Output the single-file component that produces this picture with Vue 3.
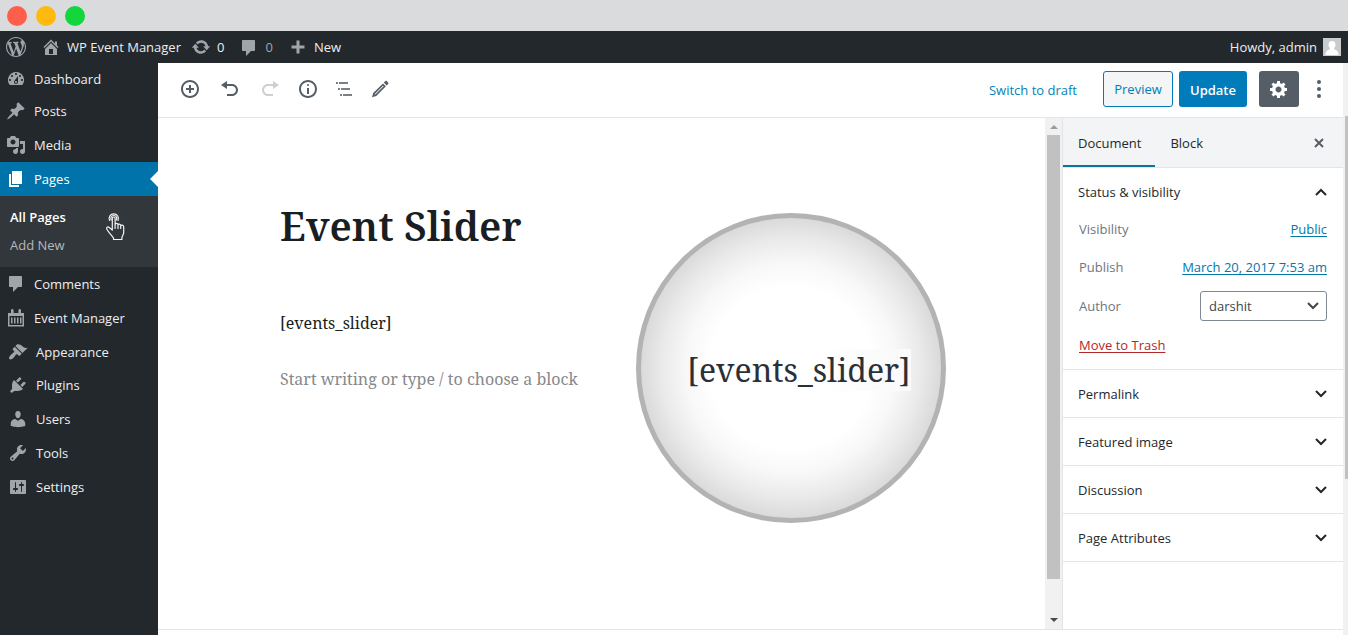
<script setup>
import { ref } from 'vue'

const icons = {
  wordpress: 'M20 10c0-5.51-4.49-10-10-10C4.48 0 0 4.49 0 10c0 5.52 4.48 10 10 10 5.51 0 10-4.48 10-10zM7.78 15.37L4.37 6.22c.55-.02 1.17-.08 1.17-.08.5-.06.44-1.13-.06-1.11 0 0-1.45.11-2.37.11-.18 0-.37 0-.58-.01C4.12 2.69 6.87 1.11 10 1.11c2.33 0 4.45.87 6.05 2.34-.68-.11-1.65.39-1.65 1.58 0 .74.45 1.36.9 2.1.35.61.55 1.36.55 2.46 0 1.49-1.4 5-1.4 5l-3.03-8.37c.54-.02.82-.17.82-.17.5-.05.44-1.25-.06-1.22 0 0-1.44.12-2.38.12-.87 0-2.33-.12-2.33-.12-.5-.03-.56 1.2-.06 1.22l.92.08 1.26 3.41zM17.41 10c.24-.64.74-1.87.43-4.25.7 1.29 1.05 2.71 1.05 4.25 0 3.29-1.73 6.24-4.4 7.78.97-2.59 1.94-5.2 2.92-7.78zM6.1 18.09C3.12 16.65 1.11 13.53 1.11 10c0-1.3.23-2.48.72-3.59C3.25 10.3 4.67 14.2 6.1 18.09zm4.03-6.63l2.58 6.98c-.86.29-1.76.45-2.71.45-.79 0-1.57-.11-2.29-.33.81-2.38 1.62-4.74 2.42-7.1z',
  home: 'M16 8.5l1.53 1.53-1.06 1.06L10 4.6l-6.47 6.49-1.06-1.06L10 2.5l4 4v-2h2v4zm-6-2.46l6 5.99V18H4v-5.97zM12 17v-5H8v5h4z',
  update: 'M10.2 3.28c3.53 0 6.43 2.61 6.92 6h2.08l-3.5 4-3.5-4h2.32c-.45-1.97-2.21-3.45-4.32-3.45-1.45 0-2.73.71-3.54 1.78L4.95 5.66C6.23 4.2 8.11 3.28 10.2 3.28zm-.4 13.44c-3.52 0-6.43-2.61-6.92-6H.8l3.5-4c1.17 1.33 2.33 2.67 3.5 4H5.48c.45 1.97 2.21 3.45 4.32 3.45 1.45 0 2.73-.71 3.54-1.78l1.71 1.95c-1.28 1.46-3.15 2.38-5.25 2.38z',
  comment: 'M4 2h11c.6 0 1 .4 1 1v9c0 .6-.4 1-1 1h-3l-5 5v-5H4c-.6 0-1-.4-1-1V3c0-.6.4-1 1-1z',
  plus: 'M8.5 3.5h3v5h5v3h-5v5h-3v-5h-5v-3h5z',
  dashboard: 'M3.76 16h12.48A7.998 7.998 0 0 0 10 3a7.998 7.998 0 0 0-6.24 13zM10 4c.55 0 1 .45 1 1s-.45 1-1 1-1-.45-1-1 .45-1 1-1zM6 6c.55 0 1 .45 1 1s-.45 1-1 1-1-.45-1-1 .45-1 1-1zm8 0c.55 0 1 .45 1 1s-.45 1-1 1-1-.45-1-1 .45-1 1-1zm-5.37 5.55L12 7v6c0 1.1-.9 2-2 2s-2-.9-2-2c0-.57.24-1.08.63-1.45zM4 10c.55 0 1 .45 1 1s-.45 1-1 1-1-.45-1-1 .45-1 1-1zm12 0c.55 0 1 .45 1 1s-.45 1-1 1-1-.45-1-1 .45-1 1-1zm-5 3c0-.55-.45-1-1-1s-1 .45-1 1 .45 1 1 1 1-.45 1-1z',
  post: 'M10.44 3.02l1.82-1.82 6.36 6.35-1.83 1.82c-1.05-.68-2.48-.57-3.41.36l-.75.75c-.92.93-1.04 2.35-.35 3.41l-1.83 1.82-2.41-2.41-2.8 2.79c-.42.42-3.38 2.71-3.8 2.29s1.86-3.39 2.28-3.81l2.79-2.79L4.1 9.36l1.83-1.82c1.05.69 2.48.57 3.4-.36l.75-.75c.93-.92 1.05-2.35.36-3.41z',
  media: 'M13 11V4c0-.55-.45-1-1-1h-1.67L9 1H5L3.67 3H2c-.55 0-1 .45-1 1v7c0 .55.45 1 1 1h10c.55 0 1-.45 1-1zM7 4.5c1.38 0 2.5 1.12 2.5 2.5S8.38 9.5 7 9.5 4.5 8.38 4.5 7 5.62 4.5 7 4.5zM14 6h5v10.5c0 1.38-1.12 2.5-2.5 2.5S14 17.88 14 16.5s1.12-2.5 2.5-2.5c.17 0 .34.02.5.05V9h-3V6zm-4 8.05V13h2v3.5c0 1.38-1.12 2.5-2.5 2.5S7 17.88 7 16.5 8.12 14 9.5 14c.17 0 .34.02.5.05z',
  page: 'M6 15V2h10v13H6zm-1 1h8v2H3V5h2v11z',
  calendar: 'M2 5h3V2.5C5 1.7 5.5 1 6.3 1s1.300.7 1.300 1.500V5h4.800V2.500c0-.8.5-1.500 1.300-1.500s1.300.7 1.300 1.500V5h3v13.500H2zM3.500 8v9h13V8zM5 9.500h1.500v6H5zm3 0h1.500v6H8zm3 0h1.500v6H11zm3 0h1.500v6H14z',
  appearance: 'M14.48 11.06L7.41 3.99l1.5-1.5c.5-.56 2.3-.47 3.51.32 1.21.8 1.43 1.28 2.91 2.1 1.18.64 2.45 1.26 4.45.85zm-.71.71L6.7 4.7 4.93 6.47c-.39.39-.39 1.02 0 1.41l1.06 1.06c.39.39.39 1.03 0 1.42-.6.6-1.43 1.11-2.21 1.69-.35.26-.7.53-1.01.84C1.43 14.23.4 16.08 1.4 17.07c.99 1 2.84-.03 4.18-1.36.31-.31.58-.66.85-1.02.57-.78 1.08-1.61 1.69-2.21.39-.39 1.02-.39 1.41 0l1.06 1.06c.39.39 1.02.39 1.41 0z',
  plugins: 'M13.11 4.36L9.87 7.6 8 5.73l3.24-3.24c.35-.34 1.05-.2 1.56.32.52.51.66 1.21.31 1.55zm-8 1.77l.91-1.12 9.01 9.01-1.19.84c-.71.71-2.63 1.16-3.82 1.16H6.14L4.9 17.26c-.59.59-1.54.59-2.12 0-.59-.58-.59-1.53 0-2.12l1.24-1.24v-3.88c0-1.13.4-3.19 1.09-3.89zm7.26 3.97l3.24-3.24c.34-.35 1.04-.21 1.55.31.52.51.66 1.21.31 1.55l-3.24 3.25z',
  users: 'M10 9.25c-2.27 0-2.73-3.44-2.73-3.44C7 4.02 7.82 2 9.97 2c2.16 0 2.98 2.02 2.71 3.81 0 0-.41 3.44-2.68 3.44zm0 2.57L12.72 10c2.39 0 4.52 2.33 4.52 4.53v2.49s-3.65 1.13-7.24 1.13c-3.65 0-7.24-1.13-7.24-1.13v-2.49c0-2.25 1.94-4.48 4.47-4.48z',
  tools: 'M16.68 9.77c-1.34 1.34-3.3 1.67-4.95.99l-5.41 6.52c-.99.99-2.59.99-3.58 0s-.99-2.59 0-3.57l6.52-5.42c-.68-1.65-.35-3.61.99-4.95 1.28-1.28 3.12-1.62 4.72-1.06l-2.89 2.89 2.82 2.82 2.86-2.87c.53 1.58.18 3.39-1.08 4.65zM3.81 16.21c.4.39 1.04.39 1.43 0 .4-.4.4-1.04 0-1.43-.39-.4-1.03-.4-1.43 0-.39.39-.39 1.03 0 1.43z',
  settings: 'M18 16V4c0-.55-.45-1-1-1H3c-.55 0-1 .45-1 1v12c0 .55.45 1 1 1h14c.55 0 1-.45 1-1zM8 11h1c.55 0 1 .45 1 1s-.45 1-1 1H8v1.5c0 .28-.22.5-.5.5s-.5-.22-.5-.5V13H6c-.55 0-1-.45-1-1s.45-1 1-1h1V5.5c0-.28.22-.5.5-.5s.5.22.5.5V11zm5-2h-1c-.55 0-1-.45-1-1s.45-1 1-1h1V5.5c0-.28.22-.5.5-.5s.5.22.5.5V7h1c.55 0 1 .45 1 1s-.45 1-1 1h-1v5.5c0 .28-.22.5-.5.5s-.5-.22-.5-.5V9z',
  gear: 'M18 12h-2.18c-.17.7-.44 1.35-.81 1.93l1.54 1.54-2.1 2.1-1.54-1.54c-.58.36-1.23.63-1.91.79V19H8v-2.18c-.68-.16-1.33-.43-1.91-.79l-1.54 1.54-2.12-2.12 1.54-1.54c-.36-.58-.63-1.23-.79-1.91H1V9.030h2.170c.16-.7.44-1.350.8-1.940L2.430 5.550l2.100-2.100 1.540 1.540c.58-.37 1.240-.64 1.930-.81V2h3v2.180c.68.16 1.330.43 1.910.79l1.540-1.540 2.120 2.120-1.540 1.540c.36.59.64 1.240.8 1.940H18V12zm-8.500 1.500c1.660 0 3-1.340 3-3s-1.340-3-3-3-3 1.340-3 3 1.340 3 3 3z',
  insert: 'M10 1c-5 0-9 4-9 9s4 9 9 9 9-4 9-9-4-9-9-9zm0 16c-3.900 0-7-3.100-7-7s3.100-7 7-7 7 3.100 7 7-3.100 7-7 7zm1-11H9v3H6v2h3v3h2v-3h3V9h-3V6z',
  undo: 'M12 5H7V2L1 6l6 4V7h5c2.200 0 4 1.800 4 4s-1.800 4-4 4H7v2h5c3.300 0 6-2.700 6-6s-2.700-6-6-6z',
  redo: 'M8 5h5V2l6 4-6 4V7H8c-2.200 0-4 1.800-4 4s1.800 4 4 4h5v2H8c-3.300 0-6-2.700-6-6s2.700-6 6-6z',
  info: 'M9 15h2V9H9v6zm1-10c-.5 0-1 .5-1 1s.5 1 1 1 1-.5 1-1-.5-1-1-1zm0-4c-5 0-9 4-9 9s4 9 9 9 9-4 9-9-4-9-9-9zm0 16c-3.900 0-7-3.100-7-7s3.100-7 7-7 7 3.100 7 7-3.100 7-7 7z',
  outline: 'M2 3h2v2H2zm3 0h9v2H5zM4 9h2v2H4zm3 0h9v2H7zM6 15h2v2H6zm3 0h9v2H9z',
  pencil: 'M15.200 2.200c.5-.5 1.200-.5 1.700 0l1.200 1.200c.5.5.5 1.200 0 1.700l-1.400 1.400-2.900-2.900zM13 4.400l2.900 2.900L6.300 17 2 18.200l1.200-4.300zm0 2.300l-8 8-.4 1 1-.4L13.600 7.300z',
}

const mainMenu = [
  { label: 'Dashboard', icon: 'dashboard' },
  { label: 'Posts', icon: 'post' },
  { label: 'Media', icon: 'media' },
  { label: 'Pages', icon: 'page', current: true },
]
const contentMenu = [
  { label: 'Comments', icon: 'comment' },
  { label: 'Event Manager', icon: 'calendar' },
]
const adminMenu = [
  { label: 'Appearance', icon: 'appearance' },
  { label: 'Plugins', icon: 'plugins' },
  { label: 'Users', icon: 'users' },
  { label: 'Tools', icon: 'tools' },
  { label: 'Settings', icon: 'settings' },
]
const historyTools = [
  { label: 'Add block', icon: 'insert' },
  { label: 'Undo', icon: 'undo' },
  { label: 'Redo', icon: 'redo', disabled: true },
]
const documentTools = [
  { label: 'Content structure', icon: 'info' },
  { label: 'Block navigation', icon: 'outline' },
  { label: 'Edit', icon: 'pencil' },
]
const closedPanels = ['Permalink', 'Featured image', 'Discussion', 'Page Attributes']
const author = ref('darshit')
</script>

<template>
  <div class="window">
    <div class="titlebar">
      <span class="dot red"></span><span class="dot amber"></span><span class="dot green"></span>
    </div>

    <header class="adminbar">
      <a href="#" class="bar-item logo" aria-label="About WordPress"><svg viewBox="0 0 20 20"><path :d="icons.wordpress" /></svg></a>
      <a href="#" class="bar-item site"><svg viewBox="0 0 20 20"><path :d="icons.home" /></svg>WP Event Manager</a>
      <a href="#" class="bar-item updates"><svg viewBox="0 0 20 20"><path :d="icons.update" /></svg>0</a>
      <a href="#" class="bar-item muted"><svg viewBox="0 -1 20 20"><path :d="icons.comment" /></svg>0</a>
      <a href="#" class="bar-item new"><svg viewBox="0 0 20 20"><path :d="icons.plus" /></svg>New</a>
      <a href="#" class="bar-item account">Howdy, admin
        <svg class="avatar" viewBox="0 0 18 18"><path fill="#c9cbcd" d="M0 0h18v18H0z" /><path fill="#fff" d="M9 3c2.300 0 3.500 1.600 3.500 3.600 0 1.500-.6 2.900-1.500 3.700v1c2.500.7 4.500 1.900 4.500 5.700h-13c0-3.800 2-5 4.500-5.700v-1c-.9-.8-1.500-2.200-1.500-3.700C5.500 4.600 6.700 3 9 3z" /></svg>
      </a>
    </header>

    <div class="shell">
      <nav class="menu" aria-label="Main menu">
        <div class="main-group">
          <a v-for="item in mainMenu" :key="item.label" href="#" :class="['menu-item', { current: item.current }]">
            <svg viewBox="0 0 20 20"><path :d="icons[item.icon]" /></svg>{{ item.label }}
          </a>
        </div>
        <div class="submenu">
          <a href="#" class="active">All Pages</a>
          <a href="#">Add New</a>
          <svg class="hand" viewBox="0 0 22 28">
            <g fill="none" stroke="#f4f4f4" stroke-width="1.200" stroke-linejoin="round" stroke-linecap="round">
              <path d="M5.500 7.500a4.700 4.700 0 1 1 8.500 0M7.200 7a3 3 0 1 1 5.200 0" />
              <path d="M8.300 17V5.500c0-2 2.800-2 2.800 0v6c.3-1.600 2.800-1.500 2.900.3.500-1.200 2.600-.9 2.700.8.700-1 3-.6 3 1.400v5.500c0 2.500-1.800 3.500-1.800 5.500v1.500H9.500V25c-1.500-2.500-4.500-5-6.500-8.500-1.200-2 .8-3.300 2.200-2zM11.100 11.500v4M14 12v3.500M16.700 13v2.500" />
            </g>
          </svg>
        </div>
        <a v-for="item in contentMenu" :key="item.label" href="#" class="menu-item">
          <svg viewBox="0 0 20 20"><path fill-rule="evenodd" :d="icons[item.icon]" /></svg>{{ item.label }}
        </a>
        <div class="admin-group">
          <a v-for="item in adminMenu" :key="item.label" href="#" class="menu-item">
            <svg viewBox="0 0 20 20"><path :d="icons[item.icon]" /></svg>{{ item.label }}
          </a>
        </div>
      </nav>

      <main class="editor">
        <div class="toolbar">
          <div class="tools history">
            <button v-for="t in historyTools" :key="t.label" type="button" :aria-label="t.label" :disabled="t.disabled">
              <svg viewBox="0 0 20 20"><path :d="icons[t.icon]" /></svg>
            </button>
          </div>
          <div class="tools">
            <button v-for="t in documentTools" :key="t.label" type="button" :aria-label="t.label" :class="t.icon">
              <svg viewBox="0 0 20 20"><path fill-rule="evenodd" :d="icons[t.icon]" /></svg>
            </button>
          </div>
          <div class="actions">
            <button type="button" class="draft">Switch to draft</button>
            <button type="button" class="preview">Preview</button>
            <button type="button" class="update">Update</button>
            <button type="button" class="gear" aria-label="Settings"><svg viewBox="0 0 20 20"><path :d="icons.gear" /></svg></button>
            <button type="button" class="more" aria-label="More options">
              <svg viewBox="0 0 8 20"><circle cx="4" cy="3" r="2" /><circle cx="4" cy="10" r="2" /><circle cx="4" cy="17" r="2" /></svg>
            </button>
          </div>
        </div>

        <div class="workspace">
          <section class="canvas">
            <article class="post">
              <h1>Event Slider</h1>
              <p>[events_slider]</p>
              <p class="prompt">Start writing or type / to choose a block</p>
            </article>
            <div class="lens"><span>[events_slider]</span></div>
          </section>

          <div class="scrollbar" aria-hidden="true">
            <svg viewBox="0 0 10 6"><path fill="#9b9b9b" d="M1 5l4-4 4 4z" /></svg>
            <div class="track"><div class="thumb"></div></div>
            <svg viewBox="0 0 10 6"><path fill="#4a4a4a" d="M1 1l4 4 4-4z" /></svg>
          </div>

          <aside class="sidebar">
            <div class="tabs">
              <button type="button" class="tab selected">Document</button>
              <button type="button" class="tab">Block</button>
              <button type="button" class="close" aria-label="Close settings">
                <svg viewBox="0 0 12 12"><path d="M2 2l8 8M10 2l-8 8" /></svg>
              </button>
            </div>
            <section class="panel">
              <button type="button" class="panel-title">Status &amp; visibility
                <svg viewBox="0 0 14 10"><path d="M2 8l5-5 5 5" /></svg>
              </button>
              <div class="rows">
                <div class="row"><span>Visibility</span><a href="#">Public</a></div>
                <div class="row"><span>Publish</span><a href="#">March 20, 2017 7:53 am</a></div>
                <div class="row">
                  <label for="author">Author</label>
                  <div class="select">
                    <select id="author" v-model="author"><option>darshit</option></select>
                    <svg viewBox="0 0 14 10"><path d="M2 2l5 5 5-5" /></svg>
                  </div>
                </div>
                <div class="row"><a href="#" class="trash">Move to Trash</a></div>
              </div>
            </section>
            <section v-for="name in closedPanels" :key="name" class="panel">
              <button type="button" class="panel-title">{{ name }}
                <svg viewBox="0 0 14 10"><path d="M2 2l5 5 5-5" /></svg>
              </button>
            </section>
          </aside>
        </div>
      </main>

      <div class="page-scroll" aria-hidden="true"><div class="page-thumb"></div></div>
    </div>
  </div>
</template>

<style>
body { margin: 0; }
</style>

<style scoped>
* { box-sizing: border-box; }
.window {
  display: flex;
  flex-direction: column;
  height: 100vh;
  overflow: hidden;
  background: #fff;
  color: #191e23;
  font: 13px/20px "Open Sans", "Noto Sans", sans-serif;
}
a { color: inherit; text-decoration: none; }
button { margin: 0; padding: 0; border: 0; background: none; font: inherit; color: inherit; white-space: nowrap; }
svg { display: block; flex: none; fill: currentColor; }

.titlebar { display: flex; align-items: center; gap: 9px; flex: none; height: 31px; padding-left: 7px; background: #dadbdd; }
.dot { width: 20px; height: 20px; border-radius: 50%; }
.red { background: #ff5f4a; }
.amber { background: #ffb90f; }
.green { background: #12d63c; }

.adminbar { display: flex; align-items: center; flex: none; height: 32px; padding: 0 7px 0 6px; background: #23282d; color: #eee; }
.bar-item { display: flex; align-items: center; gap: 6px; white-space: nowrap; }
.bar-item svg { width: 20px; height: 20px; color: #a0a5aa; }
.site { margin-left: 15px; }
.updates { margin-left: 10px; }
.muted { margin-left: 15px; color: #a0a5aa; }
.new { margin-left: 15px; }
.account { margin-left: auto; }
.bar-item .avatar { width: 18px; height: 18px; }

.shell { display: flex; flex: 1; min-height: 0; }
.menu { flex: none; width: 158px; background: #23282d; color: #eee; }
.menu-item { display: flex; align-items: center; gap: 8px; height: 34px; padding-left: 6px; }
.main-group .menu-item:first-child { height: 31px; }
.menu-item svg { width: 20px; height: 20px; color: #a0a5aa; }
.current { position: relative; background: #0073aa; color: #fff; }
.menu-item.current svg { color: #fff; }
.current::after { content: ""; position: absolute; right: 0; top: 9px; border: 8px solid transparent; border-left-width: 0; border-right-color: #fff; }
.submenu { position: relative; display: flex; flex-direction: column; gap: 8px; height: 71px; padding: 11px 10px; background: #32373c; color: #b4b9be; }
.active { color: #fff; font-weight: 600; }
.hand { position: absolute; left: 104px; top: 17px; width: 22px; height: 28px; }
.admin-group { padding-left: 2px; }
.admin-group .menu-item:first-child { height: 33px; }

.editor { display: flex; flex-direction: column; flex: 1; min-width: 0; padding-bottom: 5px; }
.toolbar { display: flex; align-items: center; gap: 2px; flex: none; height: 55px; padding: 0 14px 2px; border-bottom: 1px solid #e2e4e7; color: #555d66; }
.tools { display: flex; }
.history { gap: 4px; }
.tools button { display: grid; place-items: center; width: 36px; height: 36px; }
.tools svg { width: 20px; height: 20px; }
.tools .outline { color: #7a8087; }
.tools button:disabled { color: #cdcfd2; }
.actions { display: flex; align-items: center; margin-left: auto; }
.draft { margin-right: 26px; padding-top: 2px; color: #0085ba; }
.preview { width: 70px; height: 36px; margin-right: 6px; border: 1px solid #007cba; border-radius: 3px; background: #f3f5f6; color: #0080b5; }
.update { width: 68px; height: 36px; margin-right: 12px; padding-top: 2px; border-radius: 3px; background: #007cba; color: #fff; font-weight: 600; }
.gear { display: grid; place-items: center; width: 40px; height: 36px; border-radius: 3px; background: #555d66; color: #fff; }
.gear svg { width: 20px; height: 20px; }
.more { display: grid; place-items: center; width: 20px; height: 36px; margin-left: 10px; }
.more svg { width: 8px; height: 20px; }

.workspace { display: flex; flex: 1; min-height: 0; border-bottom: 1px solid #e2e4e7; }
.canvas { display: flex; align-items: flex-start; flex: 1; min-width: 0; padding: 80px 24px 0 122px; font-family: "Noto Serif", "DejaVu Serif Condensed", "DejaVu Serif", serif; }
.post { flex: 0 1 356px; }
h1 { margin: 0 0 55px; font-size: 40px; line-height: 56px; font-weight: 600; white-space: nowrap; }
p { margin: 0 0 28px; font-size: 16px; line-height: 28px; white-space: nowrap; }
.prompt { color: #86898c; }
.lens { display: flex; align-items: center; justify-content: center; flex: none; width: 310px; height: 310px; margin-top: 15px; padding: 4px 0 0 16px; border: 5px solid #b3b3b3; border-radius: 50%; background: radial-gradient(closest-side, #fff 54%, #f8f8f8 70%, #eaeaea 86%, #dadada 100%); }
.lens span { padding: 4px 0; background: linear-gradient(90deg, transparent 60%, #fafafa 90%); font-size: 32px; line-height: 34px; color: #2b3038; }

.scrollbar { display: flex; flex-direction: column; align-items: center; flex: none; width: 17px; padding: 6px 0; gap: 5px; background: #f1f1f1; }
.scrollbar svg { width: 10px; height: 6px; }
.track { flex: 1; width: 13px; }
.thumb { height: 93%; background: #c1c1c1; }

.sidebar { flex: none; width: 281px; border-left: 1px solid #e2e4e7; color: #23282d; }
.tabs { display: flex; height: 50px; border-bottom: 1px solid #e2e4e7; background: #f3f4f5; }
.tab { padding: 2px 14px 0 15px; border-bottom: 2px solid transparent; }
.selected { border-color: #11719f; font-weight: 500; }
.close { width: 32px; margin: 0 8px 0 auto; display: grid; place-items: center; color: #555d66; }
.close svg { width: 12px; height: 12px; }
.close path, .panel-title path, .select path { fill: none; stroke: currentColor; stroke-width: 2; }
.panel { border-bottom: 1px solid #e2e4e7; }
.panel-title { display: flex; align-items: center; justify-content: space-between; width: 100%; height: 47px; padding: 0 15px; font-weight: 500; }
.panel-title svg, .select svg { width: 14px; height: 10px; }
.rows { display: flex; flex-direction: column; padding: 0 16px; }
.row { display: flex; align-items: center; justify-content: space-between; height: 48px; color: #6c7781; }
.row:first-child { height: 28px; }
.row:nth-child(3) { height: 30px; }
.row a { color: #0079ad; text-decoration: underline; text-underline-offset: 2px; }
.row .trash { color: #b52727; }
.select { position: relative; display: flex; align-items: center; width: 127px; height: 30px; border: 1px solid #7e8993; border-radius: 3px; color: #40464d; }
.select select { width: 100%; height: 100%; padding: 0 8px; border: 0; background: none; appearance: none; font: inherit; color: inherit; }
.select svg { position: absolute; right: 6px; pointer-events: none; }

.page-scroll { flex: none; width: 5px; padding: 53px 0 0 2px; background: #f1f1f1; }
.page-thumb { height: 70%; background: #c1c1c1; }
</style>
